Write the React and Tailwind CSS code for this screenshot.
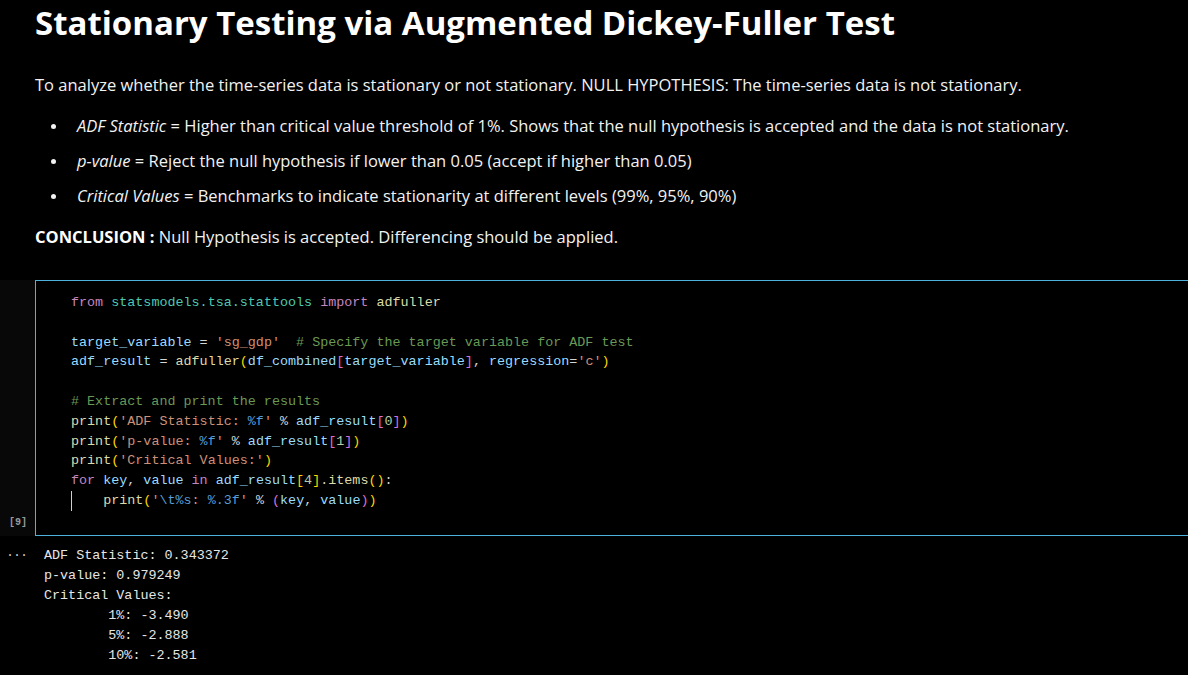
import React from "react";

const K = ({ c }) => <span className="text-[#c586c0]">{c}</span>;
const T = ({ c }) => <span className="text-[#4ec9b0]">{c}</span>;
const V = ({ c }) => <span className="text-[#9cdcfe]">{c}</span>;
const S = ({ c }) => <span className="text-[#ce9178]">{c}</span>;
const F = ({ c }) => <span className="text-[#dcdcaa]">{c}</span>;
const C = ({ c }) => <span className="text-[#6a9955]">{c}</span>;
const N = ({ c }) => <span className="text-[#b5cea8]">{c}</span>;
const B = ({ c }) => <span className="text-[#569cd6]">{c}</span>;
const Y = ({ c }) => <span className="text-[#ffd700]">{c}</span>;
const P = ({ c }) => <span className="text-[#da70d6]">{c}</span>;
const O = ({ c }) => <span className="text-[#d4d4d4]">{c}</span>;

function Line({ children }) {
  return <div className="h-[19.8px] whitespace-pre">{children}</div>;
}

function Bullet({ children }) {
  return (
    <li className="flex items-center">
      <span className="w-[42px] shrink-0 flex items-center">
        <span className="ml-[16px] w-[5px] h-[5px] rounded-full bg-[#f2f2f2]" />
      </span>
      <span>{children}</span>
    </li>
  );
}

export default function App() {
  return (
    <div className="min-h-[675px] bg-black text-white overflow-hidden">
      <div className="pl-[35px] pr-4 font-['Open_Sans',sans-serif]">
        <h1 className="pt-[1px] text-[33px] font-bold leading-[44px] text-white">
          Stationary Testing via Augmented Dickey-Fuller Test
        </h1>
        <p className="mt-[28px] text-[16.5px] leading-[24px] text-[#f2f2f2]">
          To analyze whether the time-series data is stationary or not stationary. NULL HYPOTHESIS: The time-series data is not stationary.
        </p>
        <ul className="mt-[17px] text-[16.5px] leading-[24px] text-[#f2f2f2] flex flex-col gap-[11px]">
          <Bullet>
            <i>ADF Statistic</i> = Higher than critical value threshold of 1%. Shows that the null hypothesis is accepted and the data is not stationary.
          </Bullet>
          <Bullet>
            <i>p-value</i> = Reject the null hypothesis if lower than 0.05 (accept if higher than 0.05)
          </Bullet>
          <Bullet>
            <i>Critical Values</i> = Benchmarks to indicate stationarity at different levels (99%, 95%, 90%)
          </Bullet>
        </ul>
        <p className="mt-[17px] text-[16.5px] leading-[24px] text-[#f2f2f2]">
          <b className="font-bold text-white">CONCLUSION :</b> Null Hypothesis is accepted. Differencing should be applied.
        </p>
      </div>

      <div className="mt-[31px] flex bg-[#080808]">
        <div className="w-[35px] shrink-0 flex flex-col justify-end pb-[6px]">
          <span className="pl-[9px] text-[10px] font-bold text-[#9a9a9a] font-['Liberation_Mono',monospace]">[9]</span>
        </div>
        <div className="flex-1 -mr-4 border border-solid border-[#4fb2dc] bg-black pt-[12px] pb-[24px] pl-[35px] font-['Liberation_Mono',monospace] text-[13.4px] text-[#d4d4d4]">
          <Line><K c="from" /> <T c="statsmodels.tsa.stattools" /> <K c="import" /> <F c="adfuller" /></Line>
          <Line> </Line>
          <Line><V c="target_variable" /> <O c="=" /> <S c="'sg_gdp'" />  <C c="# Specify the target variable for ADF test" /></Line>
          <Line><V c="adf_result" /> <O c="=" /> <F c="adfuller" /><Y c="(" /><V c="df_combined" /><P c="[" /><V c="target_variable" /><P c="]" />, <V c="regression" /><O c="=" /><S c="'c'" /><Y c=")" /></Line>
          <Line> </Line>
          <Line><C c="# Extract and print the results" /></Line>
          <Line><F c="print" /><Y c="(" /><S c="'ADF Statistic: " /><B c="%f" /><S c="'" /> <O c="%" /> <V c="adf_result" /><P c="[" /><N c="0" /><P c="]" /><Y c=")" /></Line>
          <Line><F c="print" /><Y c="(" /><S c="'p-value: " /><B c="%f" /><S c="'" /> <O c="%" /> <V c="adf_result" /><P c="[" /><N c="1" /><P c="]" /><Y c=")" /></Line>
          <Line><F c="print" /><Y c="(" /><S c="'Critical Values:'" /><Y c=")" /></Line>
          <Line><K c="for" /> <V c="key" />, <V c="value" /> <K c="in" /> <V c="adf_result" /><Y c="[" /><N c="4" /><Y c="]" />.<F c="items" /><Y c="()" />:</Line>
          <div className="relative h-[19.8px] whitespace-pre">
            <span className="absolute left-0 top-0 h-[19.8px] w-px bg-[#d0d0d0]" />
            {"    "}<F c="print" /><Y c="(" /><S c="'" /><B c="\t%s" /><S c=": " /><B c="%.3f" /><S c="'" /> <O c="%" /> <P c="(" /><V c="key" />, <V c="value" /><P c=")" /><Y c=")" />
          </div>
        </div>
      </div>

      <div className="flex pt-[10px] font-['Liberation_Mono',monospace] text-[13.4px] text-[#e6e6e6]">
        <div className="w-[44px] shrink-0 pl-[6px] leading-[19.8px] text-[#c8c8c8] tracking-[-1px]">···</div>
        <div className="leading-[20px] whitespace-pre">
          <div>ADF Statistic: 0.343372</div>
          <div>p-value: 0.979249</div>
          <div>Critical Values:</div>
          <div>{"        "}1%: -3.490</div>
          <div>{"        "}5%: -2.888</div>
          <div>{"        "}10%: -2.581</div>
        </div>
      </div>
    </div>
  );
}
